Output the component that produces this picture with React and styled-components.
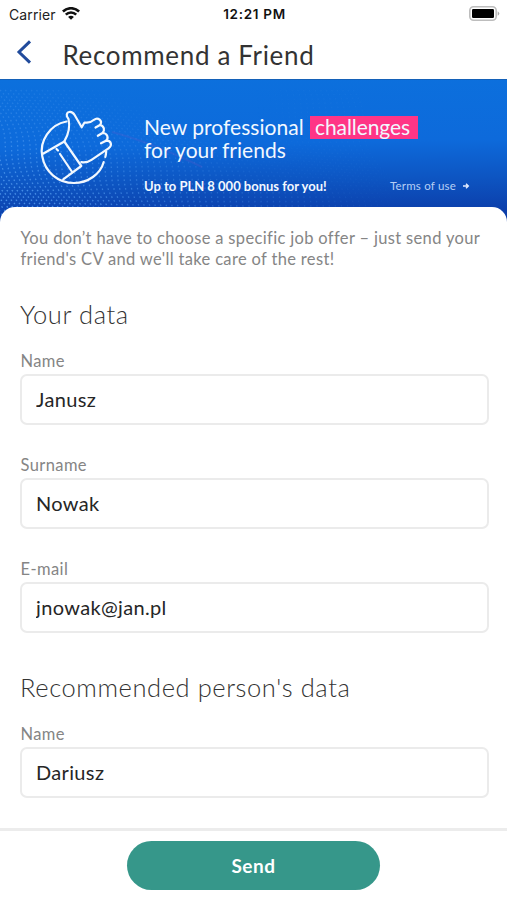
import React from "react";
import styled, { createGlobalStyle } from "styled-components";

const GlobalStyle = createGlobalStyle`
  * { box-sizing: border-box; }
  body { margin: 0; background: #fff; font-family: Lato, "Open Sans", sans-serif; }
`;

const Screen = styled.div`
  width: 507px;
  height: 900px;
  display: flex;
  flex-direction: column;
  overflow: hidden;
  background: #fff;
`;

const StatusBar = styled.div`
  height: 28px;
  flex: none;
  display: grid;
  grid-template-columns: 1fr auto 1fr;
  align-items: center;
  padding: 0 7px 0 9px;
  font-family: Inter, sans-serif;
  font-size: 14px;
  color: #222;
`;

const Carrier = styled.div`
  display: flex;
  align-items: center;
  gap: 6px;
  letter-spacing: 0.1px;
`;

const Clock = styled.div`
  font-weight: 600;
  font-size: 13.5px;
  letter-spacing: 0.7px;
  color: #111;
`;

const BatterySlot = styled.div`
  display: flex;
  justify-content: flex-end;
  padding-bottom: 1px;
`;

const Header = styled.header`
  height: 51px;
  flex: none;
  display: flex;
  align-items: center;
  padding: 3px 0 0 16px;
  gap: 30.5px;
`;

const BackButton = styled.button`
  width: 16px;
  height: 26px;
  padding: 0;
  margin-top: -6px;
  border: 0;
  background: none;
  display: flex;
`;

const Title = styled.h1`
  margin: 0;
  font-size: 26px;
  font-weight: 400;
  line-height: 32px;
  letter-spacing: 0.66px;
  color: #333;
  white-space: nowrap;
`;

const Banner = styled.section`
  position: relative;
  height: 143px;
  flex: none;
  display: flex;
  background: linear-gradient(179deg, #0c70dd 0%, #0d6adb 45%, #0d55c2 70%, #0c3fab 92%, #0c3ba4 100%);
  border-top: 1px solid #1461b8;
  color: #f2f8ff;
`;

const Waves = styled.svg`
  position: absolute;
  inset: 0;
`;

const ThumbSlot = styled.div`
  position: relative;
  width: 144px;
  flex: none;
  padding: 20.5px 0 0 30.3px;
`;

const BannerText = styled.div`
  position: relative;
  flex: 1;
  padding: 36px 37px 0 0;
`;

const Headline = styled.div`
  font-size: 21px;
  line-height: 23px;
  letter-spacing: 0.03px;
  white-space: nowrap;
  margin-top: -1px;
`;

const Highlight = styled.span`
  display: inline-block;
  height: 23px;
  line-height: 22px;
  margin: 1px 0 -1px 1px;
  padding: 0 8px 0 5px;
  background: #ff3586;
  letter-spacing: -0.08px;
  vertical-align: top;
`;

const BannerFooter = styled.div`
  display: flex;
  justify-content: space-between;
  align-items: center;
  margin-top: 15px;
  height: 20px;
  white-space: nowrap;
`;

const Bonus = styled.div`
  font-size: 13px;
  font-weight: 700;
`;

const Terms = styled.div`
  display: flex;
  align-items: center;
  gap: 6px;
  margin-top: -1px;
  font-size: 11.5px;
  letter-spacing: 0.2px;
  color: #b6cff5;
`;

const Sheet = styled.main`
  position: relative;
  flex: 1;
  min-height: 0;
  margin-top: -15px;
  padding: 21px 19px 0 20px;
  border-radius: 15px 15px 0 0;
  background: #fff;
`;

const Intro = styled.p`
  margin: 0 0 30px;
  padding-left: 0.5px;
  font-size: 16.5px;
  line-height: 20.5px;
  letter-spacing: 0.34px;
  color: #858585;
  white-space: nowrap;
`;

const SectionTitle = styled.h2`
  margin: 0;
  height: 52px;
  font-size: 25.5px;
  line-height: 30px;
  font-weight: 300;
  letter-spacing: 0.58px;
  color: #333;
  white-space: nowrap;
`;

const Field = styled.label`
  display: block;
  height: 104px;
`;

const FieldLabel = styled.span`
  display: block;
  height: 23px;
  padding-left: 0.5px;
  font-size: 16.5px;
  line-height: 20px;
  letter-spacing: 0.4px;
  color: #858585;
`;

const Input = styled.input`
  display: block;
  width: 469px;
  height: 51px;
  padding: 0 14px 1px;
  border: 2px solid #ebebeb;
  border-radius: 7px;
  outline: 0;
  background: #fff;
  font: 400 20px Lato, sans-serif;
  letter-spacing: 0.35px;
  color: #262626;
`;

const Group = styled.section`
  height: 373px;
`;

const Footer = styled.footer`
  position: relative;
  height: 72px;
  flex: none;
  display: flex;
  justify-content: center;
  align-items: flex-start;
  padding-top: 10px;
  border-top: 3px solid #ececec;
  background: #fff;
`;

const SendButton = styled.button`
  width: 253px;
  height: 49px;
  padding: 0;
  border: 0;
  border-radius: 25px;
  background: #36978a;
  color: #fff;
  font: 700 19px Lato, sans-serif;
  letter-spacing: 0.5px;
`;

const WifiIcon = () => (
  <svg width="18" height="14" viewBox="0 0 18 14" fill="none" stroke="#111" strokeWidth="2.5">
    <path d="M.9 4.5a11.5 11.5 0 0 1 16.2 0M3.8 7.7a7.3 7.3 0 0 1 10.4 0" />
    <path d="M9 12.8 6.1 10a4 4 0 0 1 5.8 0Z" fill="#111" stroke="none" />
  </svg>
);

const BatteryIcon = () => (
  <svg width="31" height="15" viewBox="0 0 31 15">
    <rect x=".8" y=".8" width="26.4" height="13.4" rx="3.8" fill="#fff" stroke="#bdbdbd" strokeWidth="1.6" />
    <rect x="3" y="3" width="22" height="9" rx="1.2" fill="#000" />
    <path d="M28.7 5.2q3.2 2.3 0 4.6z" fill="#aaa" />
  </svg>
);

const ThumbIcon = () => (
  <svg width="95" height="95" viewBox="0 0 95 95" fill="none" stroke="#f2f8ff" strokeWidth="2.2" strokeLinecap="round" strokeLinejoin="round">
    <path d="M36.5 20.5C20 23.5 9 40 12.3 55.5 15 71 28 82 44 82 58 82 70.5 73 73.7 61" />
    <path d="M76.2 50.5Q76 54 75.3 56" />
    <path d="M13.5 52.5 34.3 40.5Q41 29 38.5 18L37 15.5C35.5 10 42 9.5 44.6 14L51.7 26.3 54.5 21.5Q60 22.5 64 18.8C68 15.5 73 20 70 24L65.5 26.5" />
    <path d="M70 24C74.5 25 75 29.5 72.5 32L67.8 34.8M72.5 32C77.5 32 79 37 76 39.7L71 42.3M76 39.7C81.5 39.5 82.5 44.5 78.5 47.3L61.5 58.8Q57 62 51.3 61.2" />
    <path d="M34.3 40.5 51.3 65 33.2 78.3M26.5 48 28 49.5M30 53 41.8 70.5" />
  </svg>
);

// S-shaped strands that fall from the upper left towards the lower right.
const strands = Array.from({ length: 78 }, (_, i) => {
  const points = [];
  for (let y = 10; y <= 144; y += 4) {
    const x = -90 + i * 5.6 + y * 0.5 + Math.sin(y / 17 - i * 0.075) * 8;
    points.push(`${x.toFixed(1)} ${y}`);
  }
  return `M${points.join("L")}`;
});

const WavePattern = () => (
  <Waves width="507" height="142" viewBox="0 0 507 142" fill="none">
    <defs>
      <linearGradient id="waveFade" gradientUnits="userSpaceOnUse" x1="170" y1="15" x2="110" y2="150">
        <stop offset=".1" stopColor="#fff" stopOpacity="0" />
        <stop offset=".5" stopColor="#fff" stopOpacity=".3" />
        <stop offset="1" stopColor="#fff" stopOpacity=".75" />
      </linearGradient>
      <linearGradient id="edgeFade" x1="0" x2="1">
        <stop offset=".5" stopColor="#0c4ab6" stopOpacity="0" />
        <stop offset=".8" stopColor="#000" />
      </linearGradient>
      <mask id="waveMask">
        <rect width="507" height="142" fill="url(#waveFade)" />
        <rect width="507" height="142" fill="url(#edgeFade)" />
      </mask>
    </defs>
    <g mask="url(#waveMask)" stroke="#5ba4f5" strokeWidth="1.3" strokeDasharray="1.6 2.8">
      {strands.map((d) => (
        <path key={d} d={d} />
      ))}
    </g>
    <path d="M112 52Q153 63 202 87" stroke="#7654c8" strokeWidth="2" opacity=".2" />
  </Waves>
);

const yourData = [
  ["Name", "Janusz"],
  ["Surname", "Nowak"],
  ["E-mail", "jnowak@jan.pl"],
];

const TextField = ({ label, value }) => (
  <Field>
    <FieldLabel>{label}</FieldLabel>
    <Input defaultValue={value} />
  </Field>
);

export default function App() {
  return (
    <Screen>
      <GlobalStyle />
      <StatusBar>
        <Carrier>
          Carrier <WifiIcon />
        </Carrier>
        <Clock>12:21 PM</Clock>
        <BatterySlot>
          <BatteryIcon />
        </BatterySlot>
      </StatusBar>
      <Header>
        <BackButton aria-label="Back">
          <svg width="16" height="26" viewBox="0 0 16 26" fill="none" stroke="#214b9c" strokeWidth="3">
            <path d="M14 2.3 3 13l11 10.7" />
          </svg>
        </BackButton>
        <Title>Recommend a Friend</Title>
      </Header>
      <Banner>
        <WavePattern />
        <ThumbSlot>
          <ThumbIcon />
        </ThumbSlot>
        <BannerText>
          <Headline>
            New professional <Highlight>challenges</Highlight>
            <br />
            for your friends
          </Headline>
          <BannerFooter>
            <Bonus>Up to PLN 8 000 bonus for you!</Bonus>
            <Terms>
              Terms of use
              <svg width="8" height="8" viewBox="0 0 8 8" fill="none" stroke="#e3edff" strokeWidth="1.4">
                <path d="M1 4h5M4 1.8 6.3 4 4 6.2" />
              </svg>
            </Terms>
          </BannerFooter>
        </BannerText>
      </Banner>
      <Sheet>
        <Intro>
          You don’t have to choose a specific job offer – just send your
          <br />
          friend's CV and we'll take care of the rest!
        </Intro>
        <Group>
          <SectionTitle>Your data</SectionTitle>
          {yourData.map(([label, value]) => (
            <TextField key={label} label={label} value={value} />
          ))}
        </Group>
        <SectionTitle>Recommended person's data</SectionTitle>
        <TextField label="Name" value="Dariusz" />
      </Sheet>
      <Footer>
        <SendButton>Send</SendButton>
      </Footer>
    </Screen>
  );
}
